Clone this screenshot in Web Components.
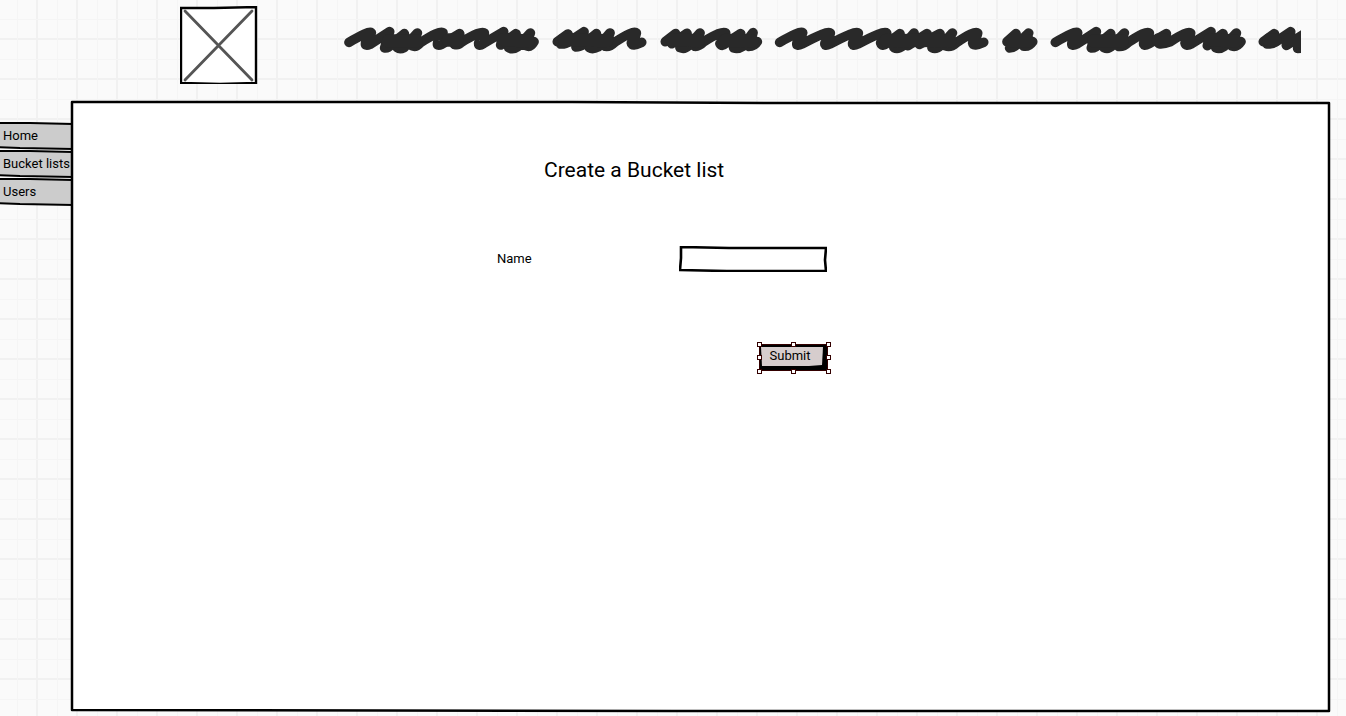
<!DOCTYPE html>
<html lang="en">
<head>
<meta charset="utf-8">
<title>Create a Bucket list</title>
<style>
html{height:100%}
body{margin:0;min-height:100%;display:grid;color:#000;font:13px/16px Roboto,"Liberation Sans",sans-serif;
background-color:#fafafa;
background-image:linear-gradient(90deg,#f5f5f5 1px,transparent 1px),linear-gradient(#f5f5f5 1px,transparent 1px),linear-gradient(90deg,#f1f1f1 2px,transparent 2px),linear-gradient(#f1f1f1 2px,transparent 2px);
background-size:40px 40px;background-position:17px 0,0 19px,36px 0,0 38px}
</style>
</head>
<body>
<bucket-page></bucket-page>
<script>
const define = (name, html) => customElements.define(name, class extends HTMLElement {
  constructor() {
    super();
    const t = document.createElement('template');
    t.innerHTML = html;
    this.attachShadow({ mode: 'open' }).append(t.content.cloneNode(true));
  }
});

define('logo-box', `
<style>:host{display:block;width:78px;height:78px}svg{display:block}</style>
<svg width="78" height="78" viewBox="0 0 78 78" role="img" aria-label="Logo">
<path d="M1 2L34 2L76 1V77L40 78L1 77Z" fill="#fff" stroke="#000" stroke-width="2.4"/>
<path d="M5 5L72 74M72 5L5 74" stroke="#555" stroke-width="2.8" stroke-linecap="round"/>
</svg>`);

define('scribble-line', `
<style>:host{display:block;overflow:hidden}svg{display:block;width:100%;height:auto}</style>
<svg viewBox="1032 75 2871 90" aria-hidden="true">
<g fill="none" stroke="#292929" stroke-width="29" stroke-linecap="round" stroke-linejoin="round">
<g transform="translate(1020 45)">
<path d="M27 82Q85 47 94 53Q90 70 77 83Q74 95 90 88L149 50L134 99Q145 100 151 90L193 56L172 98Q180 104 192 98L232 54L215 92Q228 98 240 84Q300 45 309 53Q306 70 293 83Q290 95 305 88L359 56L343 88Q355 92 364 82Q424 45 433 54Q430 70 416 84Q415 96 430 86L491 50L482 90L528 56L506 98Q518 105 532 96L571 54L558 92Q572 98 582 80"/>
<path d="M652 80L684 57L662 87Q676 88 690 78L732 50L708 96Q720 96 730 88L769 56L748 98Q758 104 774 96L810 54L796 94Q810 96 824 82Q880 45 889 54Q886 70 874 84Q875 96 905 82"/>
<path d="M145 78H228M325 75H350M490 74L565 78M672 74L800 77" stroke-width="40"/>
</g>
<g transform="translate(1950 45)">
<path d="M46 80L77 56L65 86L111 55L90 98Q104 104 116 92L150 54L134 94Q146 96 162 80Q216 46 227 54Q224 72 210 86Q216 96 226 86L272 56L251 99Q264 103 278 94L309 53L296 94Q314 94 322 80"/>
<path d="M389 82Q448 47 458 53Q454 70 441 83Q438 96 456 87Q532 46 541 54Q538 70 525 84Q522 96 540 87Q616 46 625 54Q622 70 608 84Q606 96 624 87Q700 46 710 54Q706 70 692 84Q696 96 710 86L750 56L732 98Q744 104 760 92L792 54L774 92L831 56L808 88L870 56L846 98Q858 104 872 92L907 54L886 92Q902 98 918 84Q974 46 983 54Q980 70 968 84Q970 96 1001 82"/>
<path d="M66 74L145 77M226 76L305 78M708 76L900 77" stroke-width="40"/>
</g>
<g transform="translate(2985 45)">
<path d="M36 80L63 56L44 99Q58 99 68 86L101 54L85 93Q102 96 113 80"/>
<path d="M181 82Q239 47 248 53Q245 70 231 83Q228 96 246 87L304 50L289 99Q302 100 314 84L347 56L327 98Q340 104 352 92L388 54L370 94Q386 96 400 82Q454 46 463 54Q460 70 446 84Q444 96 462 86L514 56L492 86Q506 88 526 80Q578 46 587 54Q584 70 570 84Q572 96 590 86L648 50L637 92L684 56L662 98Q674 104 688 94L724 54L710 93Q726 98 738 80"/>
<path d="M805 80L838 56L816 87Q832 88 846 78L887 50L874 91L930 55L908 100L940 98"/>
<path d="M52 77H98M296 78H382M490 75H508M644 74L720 78M822 75H840M884 74L930 82" stroke-width="40"/>
</g>
</g></svg>`);

define('side-tab', `
<style>
:host{display:block;height:28px}
a{position:relative;display:flex;align-items:center;height:26px;padding-left:3px;color:#000;text-decoration:none;white-space:nowrap}
svg{position:absolute;inset:0;width:100%;height:100%;overflow:visible;z-index:-1}
path{vector-effect:non-scaling-stroke}
</style>
<a href="#"><svg viewBox="0 0 72 26" preserveAspectRatio="none" aria-hidden="true"><path d="M-4 0L30 0L73 1V26L20 25L-4 24Z" fill="#ccc" stroke="#000" stroke-width="2"/></svg><slot></slot></a>`);

define('sketch-panel', `
<style>
:host{display:block;position:relative;min-width:0}
svg{position:absolute;inset:0;width:100%;height:100%;overflow:visible}
path{vector-effect:non-scaling-stroke}
div{position:relative}
</style>
<svg viewBox="0 0 1257 609" preserveAspectRatio="none" aria-hidden="true"><path d="M0 0L500 0L700 1L1257 1L1257 300L1257 609L600 609L0 608L0 300Z" fill="#fff" stroke="#000" stroke-width="2.5" stroke-linejoin="round"/></svg>
<div><slot></slot></div>`);

define('text-field', `
<style>
:host{display:flex;justify-content:space-between;align-items:center}
span{position:relative;display:block;width:148px;height:26px}
input{box-sizing:border-box;width:100%;height:100%;padding:4px 8px;border:0;background:none;font:inherit;outline:0;display:block}
svg{position:absolute;inset:0;pointer-events:none}
</style>
<label for="field"><slot></slot></label>
<span><input id="field" type="text"><svg width="148" height="26" viewBox="0 0 148 26" fill="none" stroke="#000" stroke-width="2.6" aria-hidden="true"><path d="M2 1L50 2L147 2L146 14L147 25L80 25L48 25L1 24L2 12Z"/></svg></span>`);

define('submit-button', `
<style>
:host{display:block;position:relative;isolation:isolate;width:70px;height:28px}
button{box-sizing:border-box;display:block;width:100%;height:100%;padding:0 4px 2px 0;border:0;background:none;font:inherit;color:#000}
svg{position:absolute;inset:0;z-index:-1}
.handles{z-index:1;pointer-events:none;overflow:visible}
</style>
<svg width="70" height="28" viewBox="0 0 70 28" aria-hidden="true"><path d="M2 2H70V27H2Z"/><path d="M4 4L66 4L65 22L52 23L5 23Z" fill="#d6cdcd"/></svg>
<button type="submit"><slot></slot></button>
<svg class="handles" width="70" height="28" viewBox="0 0 70 28" fill="#fff" stroke="#300" shape-rendering="crispEdges" aria-hidden="true">
<path d="M2.500 1.500H70.500V27.500H2.500Z" fill="none"/>
<path d="M.5-.5h4v4h-4zM34.500-.5h4v4h-4zM69.500-.5h4v4h-4zM.5 12.500h4v4h-4zM69.500 12.500h4v4h-4zM.5 26.500h4v4h-4zM34.500 26.500h4v4h-4zM69.500 26.500h4v4h-4z"/></svg>`);

define('bucket-form', `
<style>
:host{display:grid;grid-template-columns:minmax(0,425fr) 330px minmax(0,502fr);padding-top:56px}
form{grid-column:2}
h1{margin:0;padding-left:47px;font-size:21px;line-height:24px;font-weight:400;white-space:nowrap}
text-field{margin-top:64px}
submit-button{margin:71px 0 0 auto}
</style>
<form><h1>Create a Bucket list</h1><text-field>Name</text-field><submit-button>Submit</submit-button></form>`);

define('bucket-page', `
<style>
:host{display:grid;grid-template-rows:102px 1fr;isolation:isolate}
header{display:grid;grid-template-columns:78px minmax(0,1fr);column-gap:86px;padding:6px 45px 0 180px}
scribble-line{margin-top:19px}
main{display:grid;grid-template-columns:72px minmax(0,1fr);padding:0 17px 5px 0}
nav{padding-top:21px}
</style>
<header><logo-box></logo-box><scribble-line></scribble-line></header>
<main><nav><side-tab>Home</side-tab><side-tab>Bucket lists</side-tab><side-tab>Users</side-tab></nav>
<sketch-panel><bucket-form></bucket-form></sketch-panel></main>`);
</script>
</body>
</html>
